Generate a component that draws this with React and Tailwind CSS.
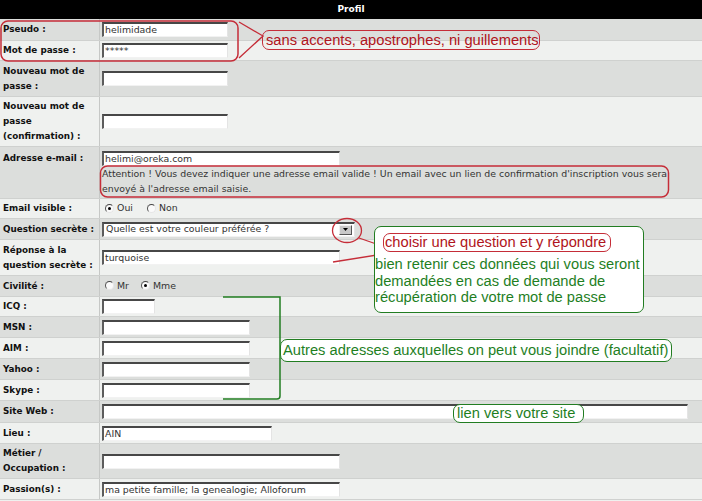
import React from "react";

const F = "font-['DejaVu_Sans',Verdana,sans-serif]";

function Row({ h, dark, label, children, labelClass = "items-center", valueClass = "items-center" }) {
  return (
    <div className={`flex ${h} ${dark ? "bg-[#dcdedc]" : "bg-[#eff1ef]"} border-b border-[#cfd1cf]`}>
      <div className={`w-[100px] shrink-0 border-r border-[#c6c8c6] flex ${labelClass} pl-[3px] font-bold text-[8.8px] leading-[15px] text-[#111]`}>
        <div>{label}</div>
      </div>
      <div className={`flex-1 flex ${valueClass} pl-[2px]`}>{children}</div>
    </div>
  );
}

function Input({ w, value = "" }) {
  return (
    <div className={`${w} h-[15px] shrink-0 bg-white border-t-2 border-l-2 border-t-[#474747] border-l-[#5c5c5c] border-r border-b border-r-[#e4e4e4] border-b-[#f2f2f2] text-[9.4px] leading-[12px] pl-[1px] text-[#333] whitespace-nowrap overflow-hidden`}>
      {value}
    </div>
  );
}

function Radio({ checked, label }) {
  return (
    <div className="flex items-center">
      <span className="w-[9px] h-[9px] rounded-full bg-[#fafafa] border border-t-[#444] border-l-[#555] border-r-[#e6e6e6] border-b-[#e6e6e6] flex items-center justify-center">
        {checked && <span className="w-[3px] h-[3px] rounded-full bg-black" />}
      </span>
      <span className="ml-[3px] text-[9.4px] text-[#333]">{label}</span>
    </div>
  );
}

export default function App() {
  const red = "#c52d38";
  const green = "#227d22";
  return (
    <div className={`relative w-[702px] h-[501px] overflow-hidden bg-[#eff1ef] ${F}`}>
      <div className="h-[19px] bg-black flex items-center justify-center text-white font-bold text-[9px]">Profil</div>

      <Row h="h-[22px]" dark label="Pseudo :">
        <Input w="w-[126px]" value="helimidade" />
      </Row>
      <Row h="h-[20px]" label="Mot de passe :">
        <Input w="w-[126px]" value="*****" />
      </Row>
      <Row h="h-[36px]" dark label={<>Nouveau mot de<br />passe :</>}>
        <Input w="w-[126px]" />
      </Row>
      <Row h="h-[50px]" label={<>Nouveau mot de<br />passe<br />(confirmation) :</>}>
        <Input w="w-[126px]" />
      </Row>
      <Row h="h-[52px]" dark label="Adresse e-mail :" labelClass="items-start pt-[4px]" valueClass="items-start pt-[4px]">
        <div className="flex flex-col">
          <Input w="w-[238px]" value="helimi@oreka.com" />
          <div className="text-[9.4px] leading-[15px] text-[#333] whitespace-nowrap">
            Attention ! Vous devez indiquer une adresse email valide ! Un email avec un lien de confirmation d'inscription vous sera
            <br />
            envoyé à l'adresse email saisie.
          </div>
        </div>
      </Row>
      <Row h="h-[20px]" label="Email visible :">
        <div className="flex items-center ml-[3px] gap-[14px]">
          <Radio checked label="Oui" />
          <Radio label="Non" />
        </div>
      </Row>
      <Row h="h-[21px]" dark label="Question secrète :">
        <div className="w-[253px] h-[15px] bg-white border-t-2 border-l-2 border-t-[#474747] border-l-[#5c5c5c] border-r border-b border-r-[#e4e4e4] border-b-[#f2f2f2] flex items-center justify-between">
          <span className="text-[9.4px] text-[#333] pl-[2px] whitespace-nowrap">Quelle est votre couleur préférée ?</span>
          <span className="w-[13px] h-[10px] mr-[2px] bg-[#c8c8c8] border border-t-[#f0f0f0] border-l-[#f0f0f0] border-r-[#555] border-b-[#555] flex items-center justify-center">
            <svg width="5" height="3" viewBox="0 0 5 3"><path d="M0 0H5L2.5 3Z" fill="#000" /></svg>
          </span>
        </div>
      </Row>
      <Row h="h-[36px]" label={<>Réponse à la<br />question secrète :</>}>
        <Input w="w-[238px]" value="turquoise" />
      </Row>
      <Row h="h-[21px]" dark label="Civilité :">
        <div className="flex items-center ml-[3px] gap-[12px]">
          <Radio label="Mr" />
          <Radio checked label="Mme" />
        </div>
      </Row>
      <Row h="h-[20px]" label="ICQ :">
        <Input w="w-[53px]" />
      </Row>
      <Row h="h-[21px]" dark label="MSN :">
        <Input w="w-[148px]" />
      </Row>
      <Row h="h-[21px]" label="AIM :">
        <Input w="w-[148px]" />
      </Row>
      <Row h="h-[21px]" dark label="Yahoo :">
        <Input w="w-[148px]" />
      </Row>
      <Row h="h-[21px]" label="Skype :">
        <Input w="w-[148px]" />
      </Row>
      <Row h="h-[22px]" dark label="Site Web :">
        <Input w="w-[586px]" />
      </Row>
      <Row h="h-[21px]" label="Lieu :">
        <Input w="w-[170px]" value="AIN" />
      </Row>
      <Row h="h-[35px]" dark label={<>Métier /<br />Occupation :</>}>
        <Input w="w-[238px]" />
      </Row>
      <Row h="h-[21px]" label="Passion(s) :">
        <Input w="w-[238px]" value="ma petite famille; la genealogie; Alloforum" />
      </Row>

      {/* annotation drawings */}
      <svg className="absolute inset-0 pointer-events-none" width="702" height="501" viewBox="0 0 702 501">
        <rect x="1" y="21" width="237" height="40" rx="7" fill="none" stroke={red} strokeWidth="1.5" />
        <path d="M239 22 L263 36 L239 58" fill="none" stroke={red} strokeWidth="1.3" />
        <rect x="100.5" y="166" width="568" height="31" rx="7" fill="none" stroke={red} strokeWidth="1.5" />
        <ellipse cx="347" cy="230.5" rx="14.5" ry="12" fill="none" stroke={red} strokeWidth="1.3" />
        <path d="M359 238 L385 247" stroke={red} strokeWidth="1.3" />
        <path d="M333 262 L383 254" stroke={red} strokeWidth="1.3" />
        <path d="M223 297 H280 V396 Q280 399 277 399 H223" fill="none" stroke={green} strokeWidth="1.5" />
      </svg>

      <div className="absolute left-[262px] top-[30px] w-[278px] h-[20px] rounded-[7px] border-[1.5px] border-[#c52d38] flex items-center pl-[3px] font-['Liberation_Sans',Arial,sans-serif] text-[14.7px] text-[#b01420] whitespace-nowrap">
        sans accents, apostrophes, ni guillements
      </div>

      <div className="absolute left-[374px] top-[226px] w-[270px] h-[87px] rounded-[7px] border-[1.5px] border-[#227d22] bg-white font-['Liberation_Sans',Arial,sans-serif] text-[14.7px]">
        <div className="ml-[8px] mt-[6px] w-[228px] h-[19px] rounded-[7px] border-[1.5px] border-[#c52d38] flex items-center pl-[1px] text-[#b01420] whitespace-nowrap">
          choisir une question et y répondre
        </div>
        <div className="ml-[0px] mt-[4px] leading-[16.7px] text-[#1f7f1f] whitespace-nowrap">
          bien retenir ces données qui vous seront
          <br />
          demandées en cas de demande de
          <br />
          récupération de votre mot de passe
        </div>
      </div>

      <div className="absolute left-[280px] top-[339px] w-[392px] h-[23px] rounded-[7px] border-[1.5px] border-[#227d22] bg-white flex items-center pl-[2px] font-['Liberation_Sans',Arial,sans-serif] text-[14.7px] text-[#1f7f1f] whitespace-nowrap">
        Autres adresses auxquelles on peut vous joindre (facultatif)
      </div>

      <div className="absolute left-[453px] top-[404px] w-[131px] h-[19px] rounded-[7px] border-[1.5px] border-[#227d22] bg-white flex items-center pl-[3px] font-['Liberation_Sans',Arial,sans-serif] text-[14.7px] text-[#1f7f1f] whitespace-nowrap">
        lien vers votre site
      </div>
    </div>
  );
}
